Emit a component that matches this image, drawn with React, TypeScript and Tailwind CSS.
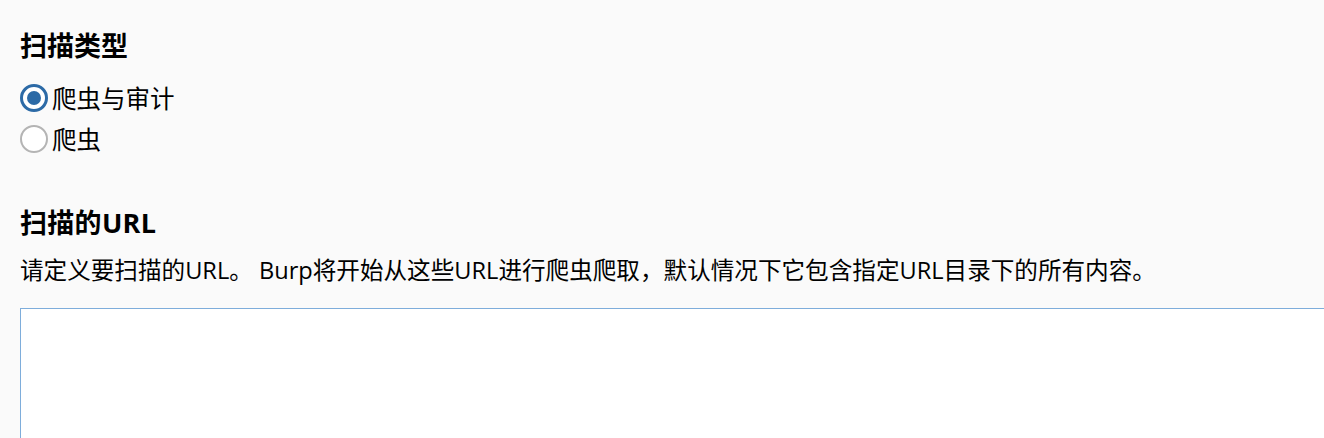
import React from "react";

export default function App() {
  const font = { fontFamily: '"Open Sans", "Noto Sans CJK SC", sans-serif' };
  return (
    <div className="w-[1324px] h-[438px] overflow-hidden bg-[#fafafa] text-black" style={font}>
      <div className="pl-[20px] pt-[27px]">
        <h2 className="text-[27px] font-bold leading-[38px]">扫描类型</h2>
        <div className="mt-[19px] flex flex-col gap-[13px]">
          <label className="flex items-center gap-[4px] text-[24.5px] leading-[27px]">
            <span className="w-[28px] h-[28px] rounded-full border-[3.5px] border-[#2c6aa6] bg-white flex items-center justify-center">
              <span className="w-[14px] h-[14px] rounded-full bg-[#2c6aa6]" />
            </span>
            爬虫与审计
          </label>
          <label className="flex items-center gap-[4px] text-[24.5px] leading-[27px]">
            <span className="w-[28px] h-[28px] rounded-full border-2 border-[#b4b4b4] bg-white" />
            爬虫
          </label>
        </div>
        <h2 className="mt-[51px] text-[27px] font-bold leading-[38px] tracking-[0.3px]">扫描的URL</h2>
        <p className="mt-[13px] text-[23.6px] leading-[30px]">
          请定义要扫描的URL。 Burp将开始从这些URL进行爬虫爬取，默认情况下它包含指定URL目录下的所有内容。
        </p>
        <div className="mt-[23px] h-[200px] w-[1400px] border border-[#7eaddb] bg-white" />
      </div>
    </div>
  );
}
